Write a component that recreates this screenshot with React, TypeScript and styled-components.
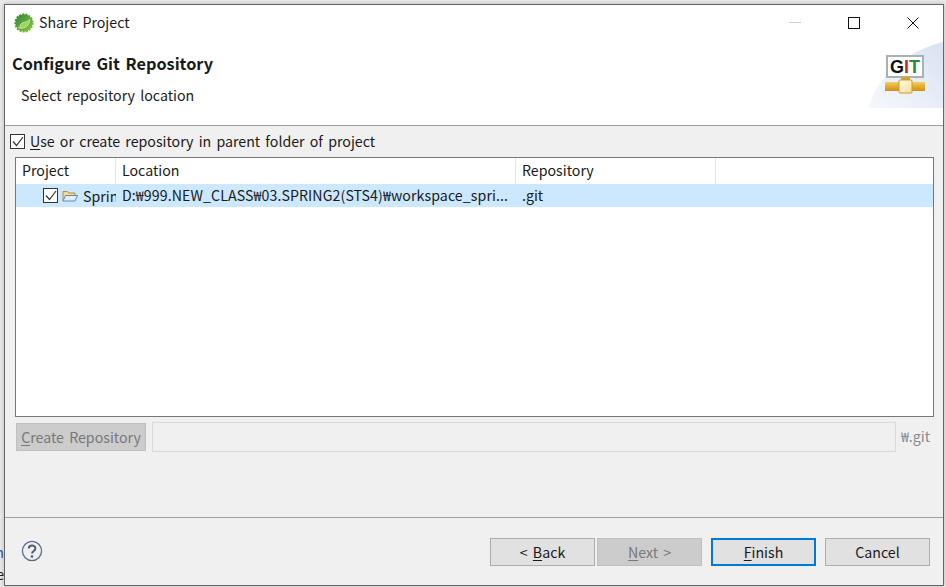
import React from "react";
import styled, { createGlobalStyle } from "styled-components";

const Global = createGlobalStyle`
  html, body { margin: 0; padding: 0; background: #ececec; }
  #root { width: 946px; height: 587px; overflow: hidden; }
`;
const Desk = styled.div`
  width: 946px; height: 587px; box-sizing: border-box; padding: 4px 2px 1px 4px; position: relative;
  font-family: "Noto Sans CJK KR", "Noto Sans", sans-serif; font-size: 14.2px; word-spacing: 2px; color: #1a1a1a;
`;
const BackText = styled.div<{ $top: number; $color: string }>`
  position: absolute; left: -6px; width: 10px; top: ${p => p.$top}px; overflow: hidden;
  text-align: right; line-height: 16px; color: ${p => p.$color};
`;
const Win = styled.div`
  position: relative; width: 100%; height: 100%; box-sizing: border-box; border: 1px solid #666;
  background: #f0f0f0; display: flex; flex-direction: column; box-shadow: 0 0 5px rgba(0, 0, 0, 0.25);
`;
const Head = styled.div`
  height: 120px; background: #fff; border-bottom: 1px solid #a0a0a0; position: relative; flex: none;
`;
const TitleBar = styled.div`
  height: 36px; display: flex; align-items: center; padding-left: 9px; gap: 5px; box-sizing: border-box;
`;
const TitleText = styled.span`
  position: relative; top: -1px;
`;
const WinButtons = styled.div`
  margin-left: auto; display: flex; align-items: center; padding-right: 1px;
`;
const WinBtn = styled.div`
  width: 59px; height: 36px; display: flex; align-items: center; justify-content: center;
`;
const Heading = styled.div`
  font-weight: 700; font-size: 16.3px; line-height: 22px; padding: 11px 0 0 7px;
`;
const Sub = styled.div`
  line-height: 20px; padding: 11px 0 0 16px;
`;
const Badge = styled.div`
  position: absolute; right: 0; top: 37px; width: 75px; height: 66px;
`;
const Body = styled.div`
  flex: 1; display: flex; flex-direction: column; padding: 4px 9px 0 5px; min-height: 0;
`;
const CheckLine = styled.label`
  display: flex; align-items: center; gap: 5px; height: 22px;
`;
const Box = styled.span`
  width: 13px; height: 13px; border: 1px solid #333; background: #fff; display: flex; flex: none;
  align-items: center; justify-content: center;
`;
const U = styled.span`
  text-decoration: underline; text-underline-offset: 2px;
`;
const Table = styled.div`
  margin: 5px 0 0 5px; height: 258px; border: 1px solid #777; background: #fff; flex: none;
`;
const Row = styled.div`
  display: grid; grid-template-columns: 100px 400px 200px 1fr;
`;
const Th = styled.div`
  height: 26px; line-height: 25px; padding-left: 6px; box-sizing: border-box;
  border-right: 1px solid #e5e5e5; &:last-child { border-right: 0; }
`;
const Td = styled.div`
  height: 23px; line-height: 22px; background: #cce8ff; white-space: nowrap; overflow: hidden;
  padding-left: 6px; box-sizing: border-box;
`;
const LocationCell = styled(Td)`
  letter-spacing: 0.08px;
`;
const ProjectCell = styled(Td)`
  display: flex; align-items: center; padding-left: 27px; gap: 4px;
`;
const FolderWrap = styled.span`
  display: flex; margin-right: 1px;
`;
const RepoLine = styled.div`
  display: flex; align-items: center; margin: 5px 0 0 6px; height: 30px;
`;
const Btn = styled.div<{ $off?: boolean; $focus?: boolean }>`
  box-sizing: border-box; height: 28px; width: 105px; display: flex; align-items: center; justify-content: center;
  background: ${p => (p.$off ? "#cccccc" : "#e1e1e1")};
  color: ${p => (p.$off ? "#787878" : "#1a1a1a")};
  border: ${p => (p.$focus ? "2px solid #0078d7" : `1px solid ${p.$off ? "#bfbfbf" : "#adadad"}`)};
`;
const CreateBtn = styled(Btn)`
  width: 130px; padding-bottom: 1px;
`;
const Field = styled.div`
  margin-left: 6px; width: 744px; height: 30px; box-sizing: border-box; border: 1px solid #d9d9d9; background: #f0f0f0;
`;
const Suffix = styled.span`
  margin-left: 5px; color: #8a8a8a; position: relative; top: -1px;
`;
const Foot = styled.div`
  height: 67px; flex: none; border-top: 1px solid #a0a0a0; display: flex; align-items: center;
  padding: 0 13px 0 16px;
`;
const HelpWrap = styled.span`
  display: flex; margin-bottom: 2px;
`;
const FootBtns = styled.div`
  margin-left: auto; display: flex; align-items: center;
`;
const NextBtn = styled(Btn)`
  margin-left: 2px;
`;
const FinishBtn = styled(Btn)`
  margin-left: 9px;
`;
const CancelBtn = styled(Btn)`
  margin-left: 9px;
`;

const Tick = () => (
  <svg width="12" height="11" viewBox="0 0 12 11" fill="none"><path d="M1 5.500 4.500 9.500 11 1" stroke="#333" strokeWidth="1.200" /></svg>
);
const Spring = () => (
  <svg width="20" height="20" viewBox="0 0 20 20">
    <defs>
      <linearGradient id="sg" x1="0" y1="0" x2="1" y2="1">
        <stop offset="0" stopColor="#2f8a34" />
        <stop offset="1" stopColor="#8cc63f" />
      </linearGradient>
    </defs>
    <circle cx="10" cy="10" r="8.600" fill="url(#sg)" stroke="url(#sg)" strokeWidth="2" strokeDasharray="2 1.200" />
    <circle cx="10" cy="10" r="8.400" fill="url(#sg)" />
    <path d="M4 14.500c3.500 1.500 8 .5 10-2.500 1-1.500 1.800-3 1.800-5.500-2 2.500-4.300 2.300-6.800 3.300-2.400 1-3.200 2.500-3 4" fill="#9fd466" stroke="#c5e79b" strokeWidth="1" />
  </svg>
);
const Folder = () => (
  <svg width="16" height="14" viewBox="0 0 16 14" fill="none">
    <path d="M1 12V2.500h4.500l1 1.500h6.500v2.500" fill="#f6dc8f" stroke="#b58f3c" />
    <path d="M1 12 3.500 6.500H15.500L13 12Z" fill="#e4eefb" stroke="#5f86bd" />
  </svg>
);
const Help = () => (
  <svg width="22" height="22" viewBox="0 0 22 22" fill="none">
    <circle cx="11" cy="11" r="9.600" stroke="#5a6c8c" strokeWidth="1.300" />
    <path d="M7.800 8.500c0-4 6.600-4 6.600 0 0 2.500-3.300 2.500-3.300 5" stroke="#4c5c7c" strokeWidth="2" />
    <circle cx="11" cy="16.500" r="1.300" fill="#4c5c7c" />
  </svg>
);
const GitLogo = () => (
  <svg width="75" height="66" viewBox="0 0 75 66">
    <defs>
      <linearGradient id="bg" x1="0" y1="1" x2="1" y2="0">
        <stop offset="0" stopColor="#f6f8fc" />
        <stop offset="1" stopColor="#d9e2f2" />
      </linearGradient>
      <linearGradient id="pipe" x1="0" y1="0" x2="0" y2="1">
        <stop offset="0" stopColor="#f2cf62" />
        <stop offset="0.55" stopColor="#e2a92a" />
        <stop offset="1" stopColor="#c99020" />
      </linearGradient>
      <linearGradient id="joint" x1="0" y1="0" x2="1" y2="1">
        <stop offset="0" stopColor="#fffdf0" />
        <stop offset="1" stopColor="#f2dc90" />
      </linearGradient>
    </defs>
    <path d="M0 66C10 35 35 10 75 0V66Z" fill="url(#bg)" />
    <rect x="19" y="14" width="36" height="21" fill="#fff" stroke="#a9b2b2" strokeWidth="2" />
    <text x="22" y="31" fontFamily="Liberation Sans, sans-serif" fontWeight="700" fontSize="18" wordSpacing="0">
      <tspan fill="#111">G</tspan><tspan fill="#c82a2a">I</tspan><tspan fill="#2d8a3a">T</tspan>
    </text>
    <rect x="33" y="35" width="9" height="4" fill="#d9a128" />
    <rect x="17" y="40" width="40" height="9" fill="url(#pipe)" />
    <rect x="31" y="38" width="13" height="13" rx="1" fill="url(#joint)" stroke="#d29b22" />
  </svg>
);

export default function App() {
  return (
    <Desk>
      <Global />
      <BackText $top={544} $color="#2a5a90">n</BackText>
      <BackText $top={566} $color="#222">e</BackText>
      <Win>
        <Head>
          <TitleBar>
            <Spring />
            <TitleText>Share Project</TitleText>
            <WinButtons>
              <WinBtn><svg width="12" height="2"><rect width="12" height="1" fill="#cfcfcf" /></svg></WinBtn>
              <WinBtn><svg width="12" height="12" fill="none"><rect x=".5" y=".5" width="11" height="11" stroke="#111" /></svg></WinBtn>
              <WinBtn><svg width="12" height="12" fill="none"><path d="M.5.500l11 11M11.500.500l-11 11" stroke="#111" /></svg></WinBtn>
            </WinButtons>
          </TitleBar>
          <Heading>Configure Git Repository</Heading>
          <Sub>Select repository location</Sub>
          <Badge><GitLogo /></Badge>
        </Head>
        <Body>
          <CheckLine><Box><Tick /></Box><span><U>U</U>se or create repository in parent folder of project</span></CheckLine>
          <Table>
            <Row><Th>Project</Th><Th>Location</Th><Th>Repository</Th><Th /></Row>
            <Row>
              <ProjectCell><Box><Tick /></Box><FolderWrap><Folder /></FolderWrap>Sprin</ProjectCell>
              <LocationCell>D:₩999.NEW_CLASS₩03.SPRING2(STS4)₩workspace_spri...</LocationCell>
              <Td>.git</Td>
              <Td />
            </Row>
          </Table>
          <RepoLine>
            <CreateBtn $off><span><U>C</U>reate Repository</span></CreateBtn>
            <Field />
            <Suffix>₩.git</Suffix>
          </RepoLine>
        </Body>
        <Foot>
          <HelpWrap><Help /></HelpWrap>
          <FootBtns>
            <Btn><span>&lt; <U>B</U>ack</span></Btn>
            <NextBtn $off><span><U>N</U>ext &gt;</span></NextBtn>
            <FinishBtn $focus><span><U>F</U>inish</span></FinishBtn>
            <CancelBtn>Cancel</CancelBtn>
          </FootBtns>
        </Foot>
      </Win>
    </Desk>
  );
}
